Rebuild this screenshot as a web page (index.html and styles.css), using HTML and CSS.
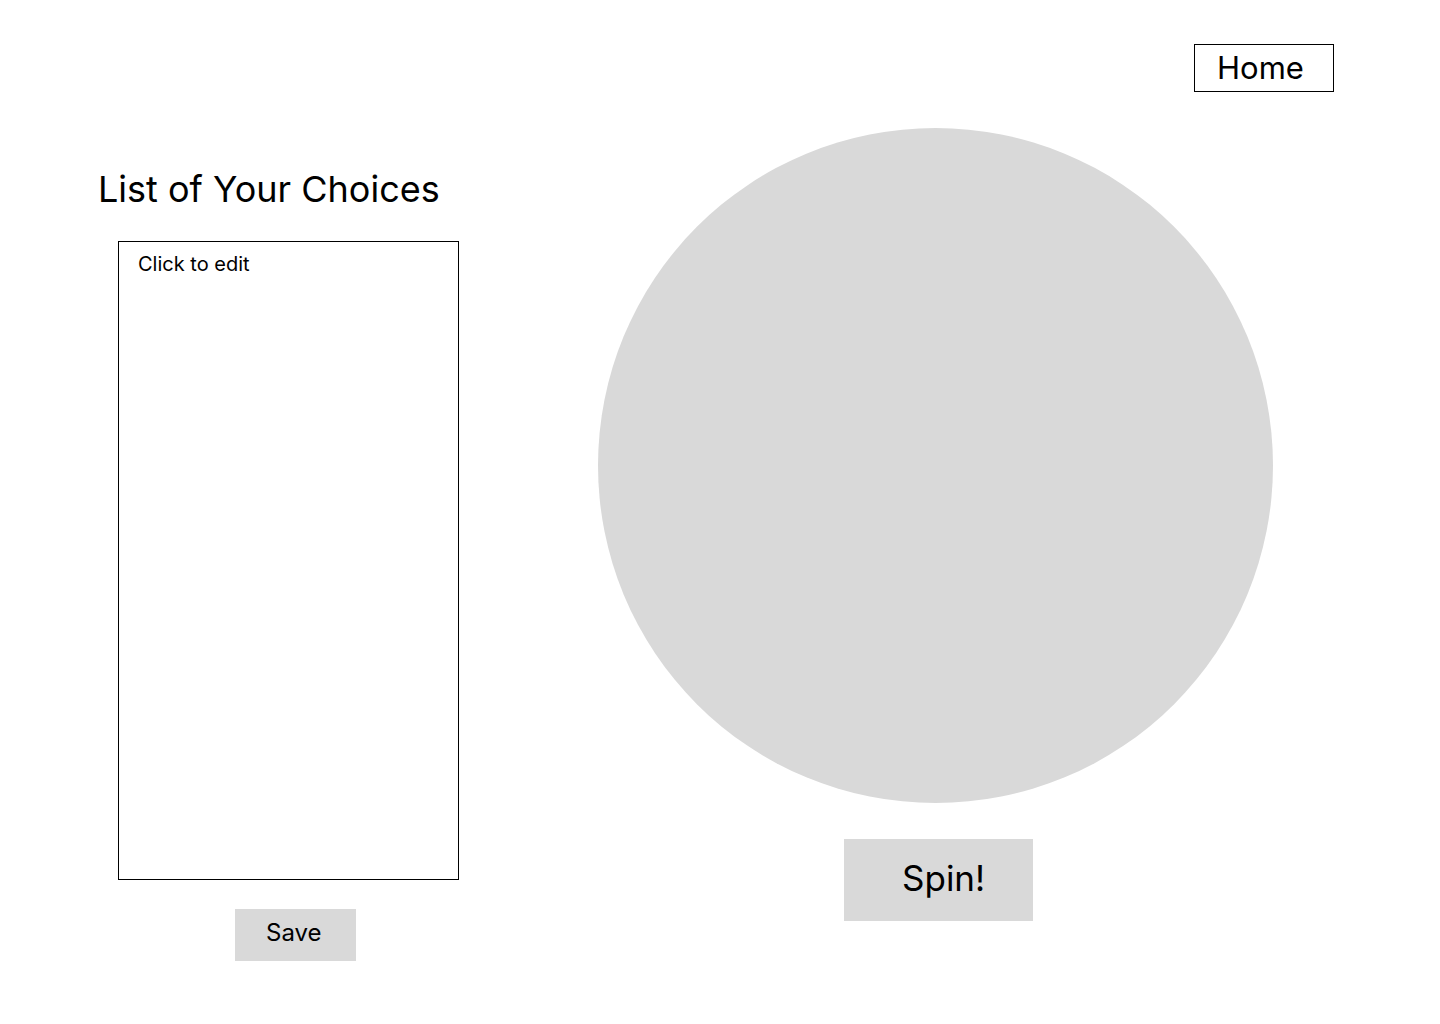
FILE: index.html
```html
<!DOCTYPE html>
<html lang="en">
<head>
<meta charset="utf-8">
<title>Spin the Wheel</title>
<link rel="stylesheet" href="styles.css">
</head>
<body>
<header class="top">
  <button class="home-btn">Home</button>
</header>
<main class="main">
  <section class="choices">
    <h1 class="choices-title">List of Your Choices</h1>
    <div class="choices-box" contenteditable="true">Click to edit</div>
    <button class="save-btn">Save</button>
  </section>
  <section class="wheel-area">
    <div class="wheel"></div>
    <button class="spin-btn">Spin!</button>
  </section>
</main>
</body>
</html>
```

FILE: styles.css
```css
* { box-sizing: border-box; }
html, body { margin: 0; padding: 0; background: #fff; }
body {
  font-family: Inter, "Noto Sans", sans-serif;
  color: #000;
  width: 1440px;
  height: 1024px;
  overflow: hidden;
}
button { font-family: inherit; color: #000; cursor: pointer; }

.top {
  display: flex;
  justify-content: flex-end;
  padding: 44px 106px 0 0;
}
.home-btn {
  width: 140px;
  height: 48px;
  border: 1px solid #000;
  background: #fff;
  font-size: 31px;
  line-height: 46px;
  padding: 0 0 0 22px;
  text-align: left;
  margin: 0;
}

.main {
  display: flex;
  align-items: flex-start;
}
.choices {
  width: 598px;
  padding: 74px 0 0 98px;
  display: flex;
  flex-direction: column;
  align-items: flex-start;
}
.choices-title {
  margin: 0;
  font-size: 36px;
  line-height: 46px;
  font-weight: 400;
}
.choices-box {
  margin: 29px 0 0 20px;
  width: 341px;
  height: 639px;
  border: 1px solid #000;
  padding: 9px 19px;
  font-size: 20px;
  line-height: 26px;
  outline: none;
}
.save-btn {
  margin: 29px 0 0 137px;
  width: 121px;
  height: 52px;
  border: none;
  background: #d9d9d9;
  font-size: 24px;
  line-height: 30px;
  text-align: left;
  padding: 0 0 4px 31px;
}

.wheel-area {
  width: 675px;
  display: flex;
  flex-direction: column;
  align-items: center;
  padding-top: 36px;
}
.wheel {
  width: 675px;
  height: 675px;
  border-radius: 50%;
  background: #d9d9d9;
}
.spin-btn {
  margin: 36px 0 0 6px;
  width: 189px;
  height: 82px;
  border: none;
  background: #d9d9d9;
  font-size: 35px;
  line-height: 44px;
  text-align: left;
  padding: 0 0 4px 58px;
}
```
